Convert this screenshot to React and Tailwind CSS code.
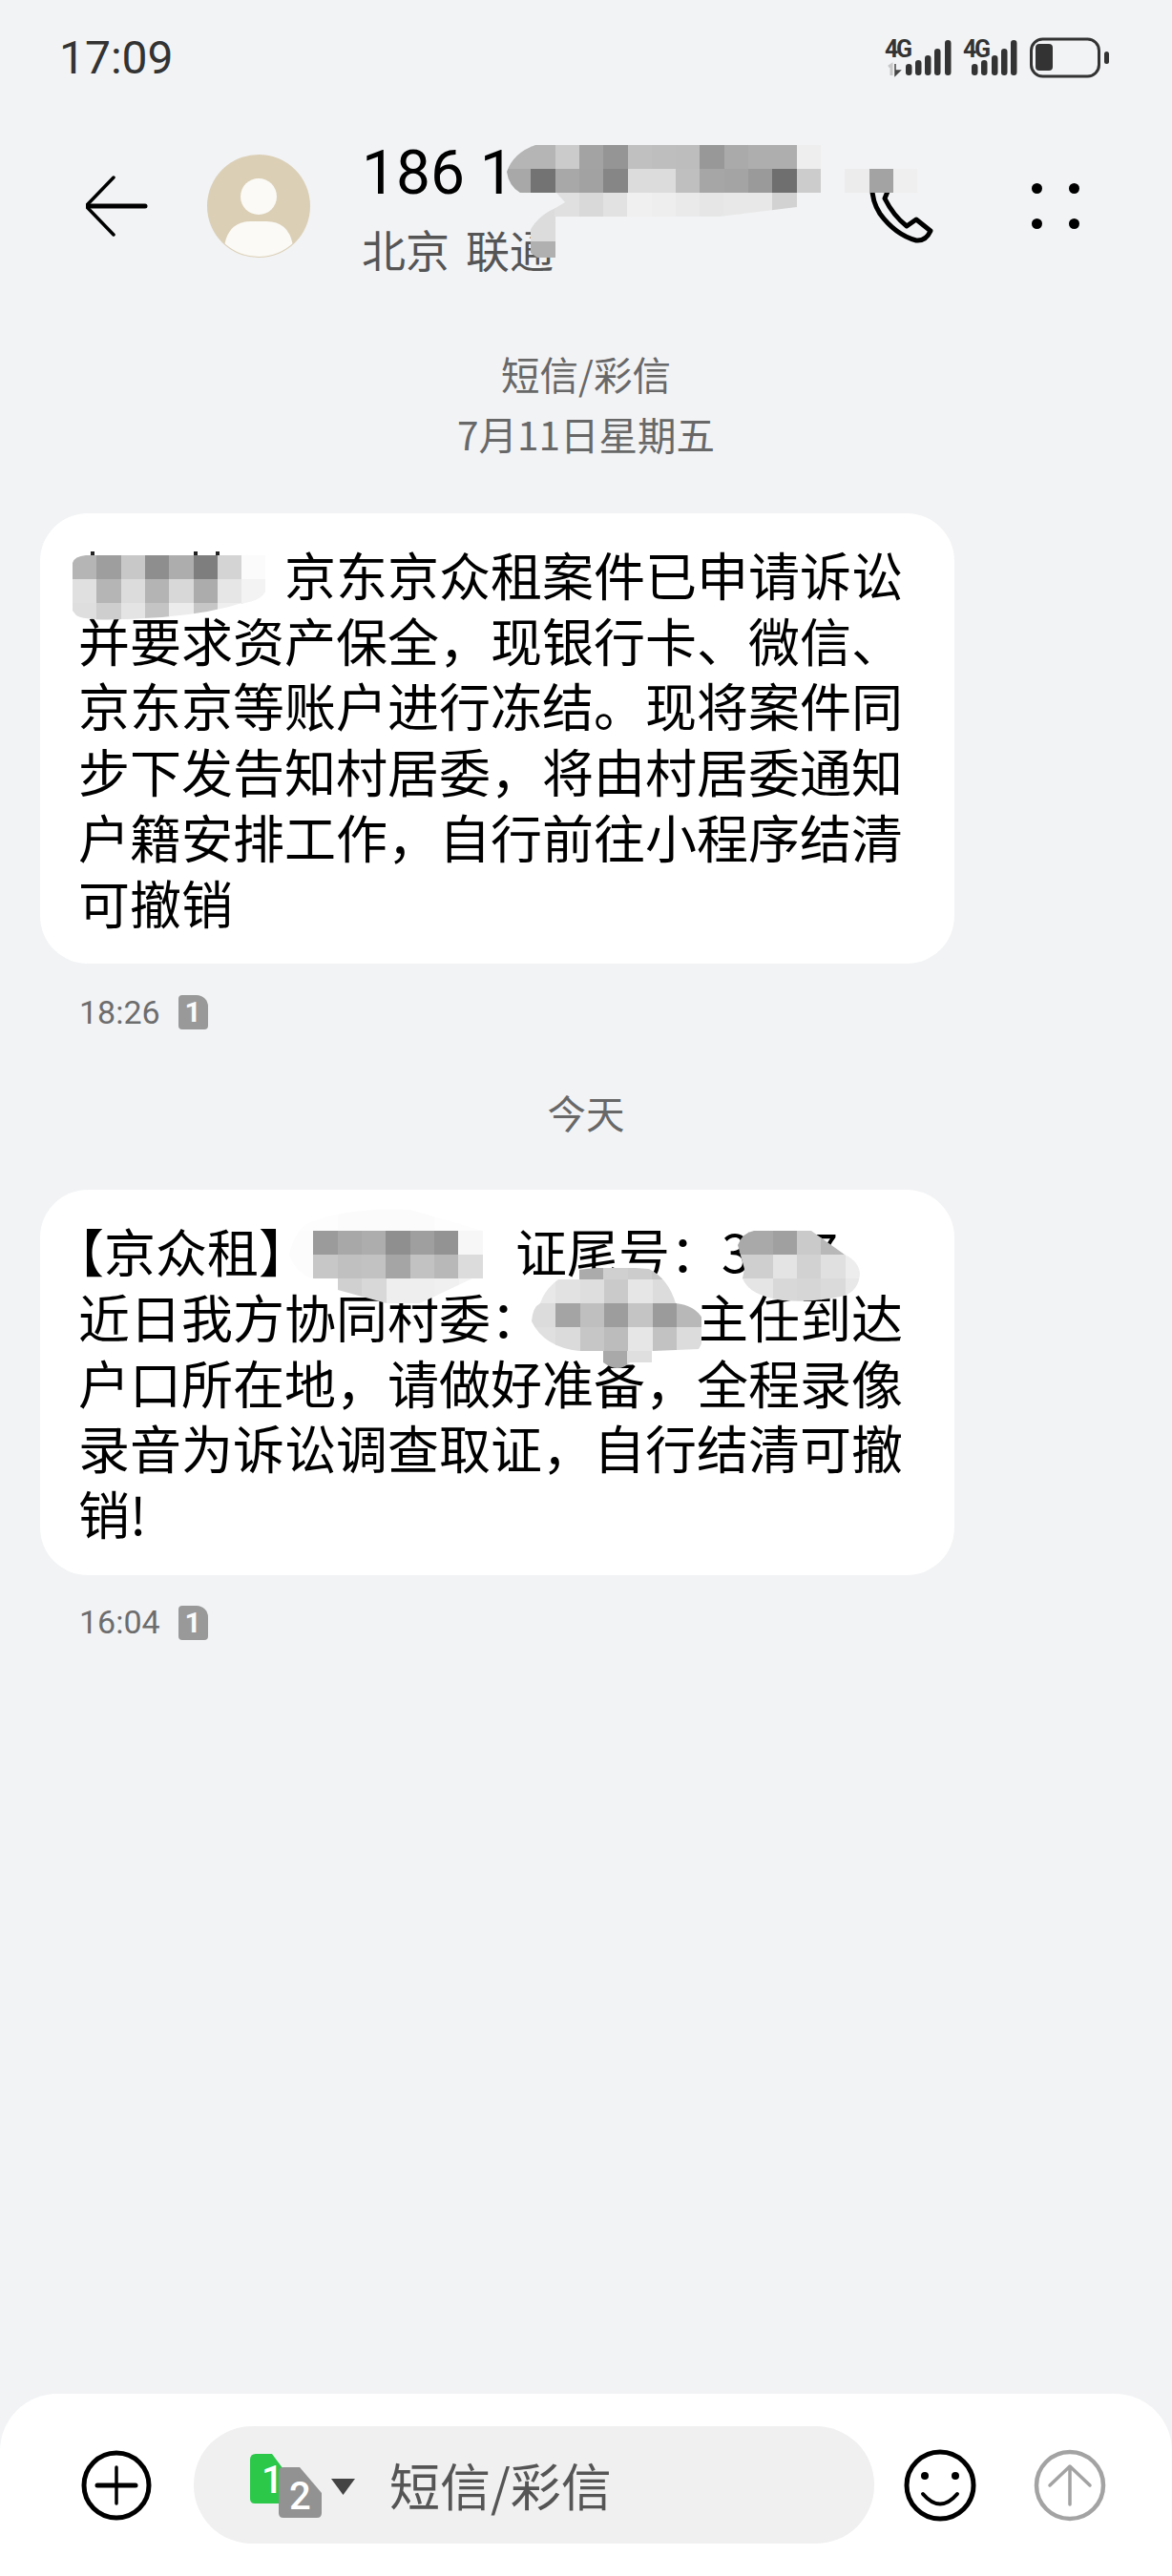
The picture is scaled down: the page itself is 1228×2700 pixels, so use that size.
const STEP = 25.3;

// mosaic patches painted over the hidden parts of the messages, coordinates are page pixels
const patches = [
  {
    id: 'm-a',
    box: 'absolute left-[520px] top-[140px]',
    view: [520, 140, 460, 140],
    clip: 'M531 180 Q538 160 561 152 H860 V202 H835 V217 L753 227 H582 V218 Q560 228 553 247 V263 L563 270 H582 V227 L582 218 L592 212 L583 202 H545 Q533 195 531 180 Z M885 177 H961 V202 H885 Z',
    rows: [
      { y: 152, x: 531, h: 25, colors: ['#b5b5b5', '#b5b5b5', '#cbcbcb', '#a3a3a3', '#959595', '#c0c0c0', '#bebebe', '#bdbdbd', '#989898', '#aaaaaa', '#aeaeae', '#aeaeae', '#eeeeef'] },
      { y: 177, x: 531, h: 25, colors: ['#a8a8a8', '#737373', '#a8a8a8', '#a2a2a2', '#868686', '#dcdcdc', '#dcdcdc', '#bfbfbf', '#a6a6a6', '#a4a4a4', '#9a9a9a', '#6f6f6f', '#cccccc', null, '#ececed', '#a3a3a3', '#efeff0'] },
      { y: 202, x: 556, h: 25, colors: ['#dcdcdc', '#e0e0e0', '#d9d9d9', '#e2e2e2', '#f0f0f0', '#eeeeee', '#eaeaea', '#e6e6e6', '#e8e8e8', '#e8e8e8', '#d2d2d2'] },
      { y: 227, x: 556, h: 26, colors: ['#dcdcdc'] },
      { y: 253, x: 556, h: 18, colors: ['#b0b0b0'] },
    ],
  },
  {
    id: 'm-b',
    box: 'absolute left-[60px] top-[570px]',
    view: [60, 570, 240, 90],
    clip: 'M76 590 Q78 583 90 582 H278 V620 Q274 630 250 633 L240 636 Q200 646 150 648 Q90 652 80 645 L76 640 Z',
    rows: [
      { y: 582, x: 76, h: 25, colors: ['#b5b5b5', '#9e9e9e', '#c8c8c8', '#8e8e8e', '#adadad', '#7e7e7e', '#d4d4d4', '#fbfbfb'] },
      { y: 607, x: 76, h: 25, colors: ['#e0e0e0', '#b5b5b5', '#dcdcdc', '#b4b4b4', '#d8d8d8', '#acacac', '#e6e6e6', '#f3f3f3'] },
      { y: 632, x: 76, h: 20, colors: ['#dedede', '#cecece', '#e4e4e4', '#c4c4c4', '#ececec', '#c6c6c6', '#efefef', '#dddddd'] },
    ],
    marks: [[95, 578], [203, 578], [226, 578]],
  },
  {
    id: 'm-c',
    box: 'absolute left-[300px] top-[1260px]',
    view: [300, 1260, 240, 110],
    clip: 'M303 1315 Q310 1285 328 1280 Q370 1265 430 1268 L506 1290 V1340 H495 L440 1366 H405 L354 1352 V1340 H328 Q310 1335 303 1315 Z',
    rows: [
      { y: 1265, x: 303, h: 25, colors: ['#fdfdfd', '#fdfdfd', '#fbfbfb', '#fbfbfb', '#fbfbfb', '#fbfbfb', '#fdfdfd', '#fdfdfd'] },
      { y: 1290, x: 303, h: 25, colors: ['#fcfcfc', '#9b9b9b', '#a8a8a8', '#adadad', '#8f8f8f', '#9f9f9f', '#939393', '#f7f7f7'] },
      { y: 1315, x: 303, h: 25, colors: ['#fcfcfc', '#c7c7c7', '#c0c0c0', '#c2c2c2', '#a5a5a5', '#c2c2c2', '#b8b8b8', '#dcdcdc'] },
      { y: 1340, x: 354, h: 26, colors: ['#d0d0d0', '#d8d8d8', '#eeeeee', '#eeeeee', '#f0f0f0', '#f4f4f4'] },
    ],
  },
  {
    id: 'm-d',
    box: 'absolute left-[550px] top-[1320px]',
    view: [550, 1320, 195, 125],
    clip: 'M557 1385 Q558 1370 566 1366 Q574 1342 605 1331 Q640 1326 680 1330 Q700 1340 708 1366 Q728 1368 736 1382 Q740 1402 732 1414 L684 1416 V1428 H660 Q648 1440 632 1428 V1416 H607 Q570 1412 557 1385 Z',
    rows: [
      { y: 1329, x: 607, h: 12, colors: ['#ababab', '#d0d0d0', '#cccccc', '#c5c5c5'] },
      { y: 1341, x: 557, h: 25, colors: ['#e8e8e8', '#e2e2e2', '#dedede', '#cacaca', '#e6e6e6', '#dcdcdc'] },
      { y: 1366, x: 557, h: 25, colors: ['#dcdcdc', '#a4a4a4', '#bfbfbf', '#9d9d9d', '#c4c4c4', '#9b9b9b', '#b8b8b8'] },
      { y: 1391, x: 557, h: 25, colors: ['#e0e0e0', '#dbdbdb', '#c6c6c6', '#bcbcbc', '#e6e6e6', '#c2c2c2', '#dcdcdc'] },
      { y: 1416, x: 632, h: 22, colors: ['#a9a9a9', '#dfdfdf'] },
    ],
  },
  {
    id: 'm-e',
    box: 'absolute left-[765px] top-[1285px]',
    view: [765, 1285, 145, 85],
    clip: 'M773 1305 Q778 1292 790 1290 H850 L885 1315 Q900 1322 901 1335 Q900 1352 885 1358 Q850 1366 820 1363 Q785 1358 778 1340 L780 1330 Z',
    rows: [
      { y: 1290, x: 759, h: 25, colors: ['#a9a9a9', '#a9a9a9', '#a0a0a0', '#cacaca', '#b8b8b8', '#b8b8b8'] },
      { y: 1315, x: 759, h: 25, colors: ['#cfcfcf', '#cfcfcf', '#e4e4e4', '#d2d2d2', '#e0e0e0', '#ededed'] },
      { y: 1340, x: 759, h: 25, colors: ['#e5e5e5', '#e5e5e5', '#d8d8d8', '#d6d6d6', '#dadada', '#e8e8e8'] },
    ],
  },
];

function Mosaic({ patch }) {
  const [x, y, w, h] = patch.view;
  return (
    <svg className={patch.box} width={w} height={h} viewBox={`${x} ${y} ${w} ${h}`}>
      <defs>
        <clipPath id={patch.id}>
          <path d={patch.clip} />
        </clipPath>
      </defs>
      <g clipPath={`url(#${patch.id})`} shapeRendering="crispEdges">
        {patch.rows.map((row) =>
          row.colors.map((c, i) =>
            c ? <rect key={`${row.y}-${i}`} x={row.x + i * STEP} y={row.y} width={STEP + 0.4} height={row.h} fill={c} /> : null
          )
        )}
      </g>
      {patch.marks?.map(([mx, my]) => (
        <rect key={mx} x={mx} y={my} width="4" height="4" fill="#222" />
      ))}
    </svg>
  );
}

function StatusIcons() {
  const bars = [
    [952, 67],
    [962, 63],
    [972, 58],
    [982, 51],
    [993, 42],
    [1021, 67],
    [1031, 63],
    [1042, 58],
    [1052, 51],
    [1062, 42],
  ];
  return (
    <svg width="240" height="46" viewBox="925 38 240 46">
      <text x="927" y="60" fontFamily="Roboto" fontWeight="700" fontSize="25" fill="#333" textLength="29">4G</text>
      <text x="1009" y="60" fontFamily="Roboto" fontWeight="700" fontSize="25" fill="#333" textLength="29">4G</text>
      <path d="M931 70l3-2v11" fill="none" stroke="#c8c8c8" strokeWidth="3" />
      <path d="M938 67v5l0 7 5-5h-5" fill="#444" stroke="#444" strokeWidth="1.5" />
      {bars.map(([x, top]) => (
        <rect key={x} x={x - 3} y={top} width="6.5" height={79 - top} rx="3.2" fill="#333" />
      ))}
      <rect x="1080.5" y="41" width="71" height="39" rx="12" fill="none" stroke="#333" strokeWidth="3" />
      <rect x="1085" y="46" width="18" height="28" rx="4" fill="#333" />
      <rect x="1157" y="54" width="5" height="13" rx="2.5" fill="#333" />
    </svg>
  );
}

function BackIcon() {
  return (
    <svg width="66" height="64" viewBox="90 185 66 64" fill="none" stroke="#000" strokeLinecap="round">
      <path d="M119 187 L91 216" strokeWidth="3.5" />
      <path d="M91 218 L119 247" strokeWidth="3.5" />
      <path d="M92 217 H152" strokeWidth="5" />
    </svg>
  );
}

function Avatar() {
  return (
    <svg width="108" height="108" viewBox="0 0 108 108">
      <defs>
        <clipPath id="avatar">
          <circle cx="54" cy="54" r="53" />
        </clipPath>
      </defs>
      <circle cx="54" cy="54" r="54" fill="#dbcfb6" />
      <g clipPath="url(#avatar)" fill="#fbfaf6">
        <circle cx="54" cy="44" r="19" />
        <path d="M18 96 Q22 70 46 70 H62 Q86 70 90 96 Q72 108 54 108 Q36 108 18 96 Z" />
      </g>
    </svg>
  );
}

function PhoneIcon() {
  return (
    <svg width="70" height="84" viewBox="908 170 70 84" fill="none" stroke="#000" strokeWidth="5" strokeLinejoin="round">
      <path d="M914 184 Q912 205 922 220 Q938 242 960 248 Q970 249 975 238 L960 226 L950 233 Q936 222 927 204 L932 192 L924 182 Z" />
    </svg>
  );
}

function SimBadge() {
  return (
    <span className="flex h-9 w-[31px] items-center justify-center rounded-[4px] rounded-tr-[12px] bg-[#999999] font-['Roboto',sans-serif] text-[30px] leading-none font-bold text-[#fafafa]">
      1
    </span>
  );
}

function Stamp({ time }) {
  return (
    <div className="ml-[83px] flex h-9 items-center gap-[19px] font-['Roboto',sans-serif] text-[34px] text-[#6d6d6d]">
      <span>{time}</span>
      <SimBadge />
    </div>
  );
}

function Bubble({ children }) {
  return (
    <div className="ml-[42px] w-[958px] rounded-[50px] bg-white pt-[30px] pr-[40px] pb-[30px] pl-[40px] text-[54px] leading-[68.7px] whitespace-nowrap text-black">
      {children}
    </div>
  );
}

function DateLabel({ children }) {
  return <div className="text-center text-[40.5px] leading-[63px] text-[#686868]">{children}</div>;
}

function PlusIcon() {
  return (
    <svg width="74" height="74" viewBox="0 0 74 74" fill="none" stroke="#000" strokeLinecap="round">
      <circle cx="37" cy="37" r="34" strokeWidth="5" />
      <path d="M17 37 H57" strokeWidth="5" />
      <path d="M37 18 V56" strokeWidth="3.5" />
    </svg>
  );
}

function SmileIcon() {
  return (
    <svg width="76" height="76" viewBox="0 0 76 76" fill="none" stroke="#000" strokeLinecap="round">
      <circle cx="38" cy="38" r="35" strokeWidth="5" />
      <circle cx="22" cy="28" r="4" fill="#000" stroke="none" />
      <circle cx="54" cy="28" r="4" fill="#000" stroke="none" />
      <path d="M20 47 Q38 68 56 47" strokeWidth="4" />
    </svg>
  );
}

function SendIcon() {
  return (
    <svg width="76" height="76" viewBox="0 0 76 76" fill="none" stroke="#a3a3a3" strokeLinecap="round" strokeLinejoin="round">
      <circle cx="38" cy="38" r="35" strokeWidth="4.5" />
      <path d="M38 58 V18 M17 38 L38 18 L59 38" strokeWidth="3.5" />
    </svg>
  );
}

function SimPicker() {
  return (
    <svg width="112" height="68" viewBox="260 2570 112 68">
      <path d="M262 2577 Q262 2571 268 2571 H285 L305 2598 V2619 Q305 2623 301 2623 H267 Q262 2623 262 2618 Z" fill="#2bc84a" />
      <path d="M292 2590 Q292 2585 297 2585 H314 L337 2612 V2633 Q337 2638 332 2638 H297 Q292 2638 292 2633 Z" fill="#929292" />
      <text x="274" y="2612" fontFamily="Roboto" fontSize="40" fontWeight="500" fill="#fff">1</text>
      <text x="303" y="2629" fontFamily="Roboto" fontSize="40" fontWeight="500" fill="#fff">2</text>
      <path d="M347 2597 H372 L359.5 2614 Z" fill="#444" />
    </svg>
  );
}

export default function App() {
  return (
    <div className="relative flex h-[2700px] w-[1228px] flex-col overflow-hidden bg-[#f2f3f5] font-['Noto_Sans_CJK_SC',sans-serif]">
      <div className="mt-[38px] flex h-[46px] items-center justify-between pr-[63px] pl-[62px]">
        <span className="font-['Roboto',sans-serif] text-[48px] leading-none text-[#333333]">17:09</span>
        <StatusIcons />
      </div>

      <div className="mt-[57px] flex h-[150px] items-center">
        <div className="ml-[90px]">
          <BackIcon />
        </div>
        <div className="ml-[61px]">
          <Avatar />
        </div>
        <div className="ml-[54px] flex flex-col">
          <div className="font-['Roboto',sans-serif] text-[64px] leading-[76px] text-black">186 1</div>
          <div className="mt-[12px] flex gap-[17px] text-[46px] leading-[56px] text-[#555555]">
            <span>北京</span>
            <span>联通</span>
          </div>
        </div>
        <div className="ml-auto">
          <PhoneIcon />
        </div>
        <div className="mr-[97px] ml-[103px] grid grid-cols-2 gap-x-[28px] gap-y-[26px]">
          <span className="size-[11px] rounded-full bg-black" />
          <span className="size-[11px] rounded-full bg-black" />
          <span className="size-[11px] rounded-full bg-black" />
          <span className="size-[11px] rounded-full bg-black" />
        </div>
      </div>

      <div className="mt-[69px]">
        <DateLabel>短信/彩信</DateLabel>
        <DateLabel>7月11日星期五</DateLabel>
      </div>

      <div className="mt-[52px]">
        <Bubble>
          <div>
            <span className="inline-block w-[216px]" />
            京东京众租案件已申请诉讼
          </div>
          <div>并要求资产保全，现银行卡、微信、</div>
          <div>京东京等账户进行冻结。现将案件同</div>
          <div>步下发告知村居委，将由村居委通知</div>
          <div>户籍安排工作，自行前往小程序结清</div>
          <div>可撤销</div>
        </Bubble>
      </div>
      <div className="mt-[33px]">
        <Stamp time="18:26" />
      </div>

      <div className="mt-[55px]">
        <DateLabel>今天</DateLabel>
      </div>

      <div className="mt-[50px]">
        <Bubble>
          <div>
            <span className="-ml-[27px]">【</span>京众租<span>】</span>
            <span className="inline-block w-[215px]" />
            证尾号：3<span className="inline-block w-[62px]" />7
          </div>
          <div>
            近日我方协同村委：<span className="inline-block w-[162px]" />
            主任到达
          </div>
          <div>户口所在地，请做好准备，全程录像</div>
          <div>录音为诉讼调查取证，自行结清可撤</div>
          <div>销!</div>
        </Bubble>
      </div>
      <div className="mt-[32px]">
        <Stamp time="16:04" />
      </div>

      <div className="mt-auto flex h-[191px] items-center rounded-t-[60px] bg-white">
        <div className="ml-[85px]">
          <PlusIcon />
        </div>
        <div className="ml-[44px] flex h-[123px] w-[713px] items-center rounded-[61px] bg-[#f0f0f1] pl-[57px]">
          <SimPicker />
          <span className="ml-[36px] text-[53px] leading-none text-[#555555]">短信/彩信</span>
        </div>
        <div className="ml-[31px]">
          <SmileIcon />
        </div>
        <div className="ml-[60px]">
          <SendIcon />
        </div>
      </div>

      {patches.map((p) => (
        <Mosaic key={p.id} patch={p} />
      ))}
    </div>
  );
}
